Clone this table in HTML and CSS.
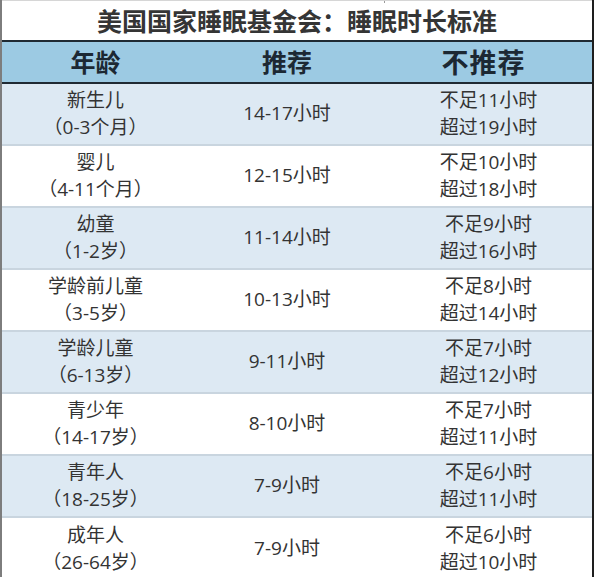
FILE: index.html
```html
<!DOCTYPE html>
<html lang="zh-CN">
<head>
<meta charset="utf-8">
<title>美国国家睡眠基金会：睡眠时长标准</title>
<link rel="stylesheet" href="styles.css">
</head>
<body>
<div class="sheet">
  <div class="strip"><div class="strip-a"></div><div class="strip-b"></div></div>
  <div class="title">美国国家睡眠基金会：睡眠时长标准</div>
  <div class="row head">
    <div class="cell">年龄</div>
    <div class="cell">推荐</div>
    <div class="cell wide">不推荐</div>
  </div>
  <div class="row blue">
    <div class="cell">新生儿<br>（0-3个月）</div>
    <div class="cell">14-17小时</div>
    <div class="cell">不足11小时<br>超过19小时</div>
  </div>
  <div class="row white">
    <div class="cell">婴儿<br>（4-11个月）</div>
    <div class="cell">12-15小时</div>
    <div class="cell">不足10小时<br>超过18小时</div>
  </div>
  <div class="row blue">
    <div class="cell">幼童<br>（1-2岁）</div>
    <div class="cell">11-14小时</div>
    <div class="cell">不足9小时<br>超过16小时</div>
  </div>
  <div class="row white">
    <div class="cell">学龄前儿童<br>（3-5岁）</div>
    <div class="cell">10-13小时</div>
    <div class="cell">不足8小时<br>超过14小时</div>
  </div>
  <div class="row blue">
    <div class="cell">学龄儿童<br>（6-13岁）</div>
    <div class="cell">9-11小时</div>
    <div class="cell">不足7小时<br>超过12小时</div>
  </div>
  <div class="row white">
    <div class="cell">青少年<br>（14-17岁）</div>
    <div class="cell">8-10小时</div>
    <div class="cell">不足7小时<br>超过11小时</div>
  </div>
  <div class="row blue">
    <div class="cell">青年人<br>（18-25岁）</div>
    <div class="cell">7-9小时</div>
    <div class="cell">不足6小时<br>超过11小时</div>
  </div>
  <div class="row white last">
    <div class="cell">成年人<br>（26-64岁）</div>
    <div class="cell">7-9小时</div>
    <div class="cell">不足6小时<br>超过10小时</div>
  </div>
</div>
</body>
</html>
```

FILE: styles.css
```css
html, body {
  margin: 0;
  padding: 0;
  background: #ffffff;
}
body {
  font-family: "Open Sans", "Noto Sans CJK SC", sans-serif;
  color: #333333;
  overflow: hidden;
}
.sheet {
  width: 594px;
  box-sizing: border-box;
  border-left: 2px solid #7d7d7d;
  border-right: 2px solid #1e1e1e;
}
.strip {
  display: grid;
  grid-template-columns: 383px 207px;
  height: 3px;
  border-top: 1px solid #d6d6d6;
  box-sizing: border-box;
}
.strip-a {
  border-right: 1px solid #9a9a9a;
}
.title {
  height: 37px;
  display: flex;
  align-items: center;
  justify-content: center;
  font-family: "Noto Sans CJK SC", sans-serif;
  font-size: 25px;
  font-weight: 700;
  color: #353535;
  line-height: 1;
  padding-bottom: 2px;
  box-sizing: border-box;
}
.row {
  display: grid;
  grid-template-columns: 187px 196px 207px;
  height: 62px;
  box-sizing: border-box;
  border-bottom: 2px solid #c9d5df;
}
.cell {
  display: flex;
  align-items: center;
  justify-content: center;
  text-align: center;
  font-size: 19px;
  line-height: 27.5px;
}
.head {
  height: 44px;
  background: #9ccae3;
  border-top: 2px solid #1f2a33;
  border-bottom: 2px solid #1f2a33;
}
.head .cell {
  font-family: "Noto Sans CJK SC", sans-serif;
  font-size: 25px;
  font-weight: 700;
  color: #1c2833;
  line-height: 1;
  padding-bottom: 2px;
}
.head .wide {
  font-size: 27px;
  letter-spacing: 1px;
  padding-right: 10px;
}
.blue {
  background: #dde9f3;
}
.white {
  background: #ffffff;
}
.last {
  border-bottom: none;
}
```
